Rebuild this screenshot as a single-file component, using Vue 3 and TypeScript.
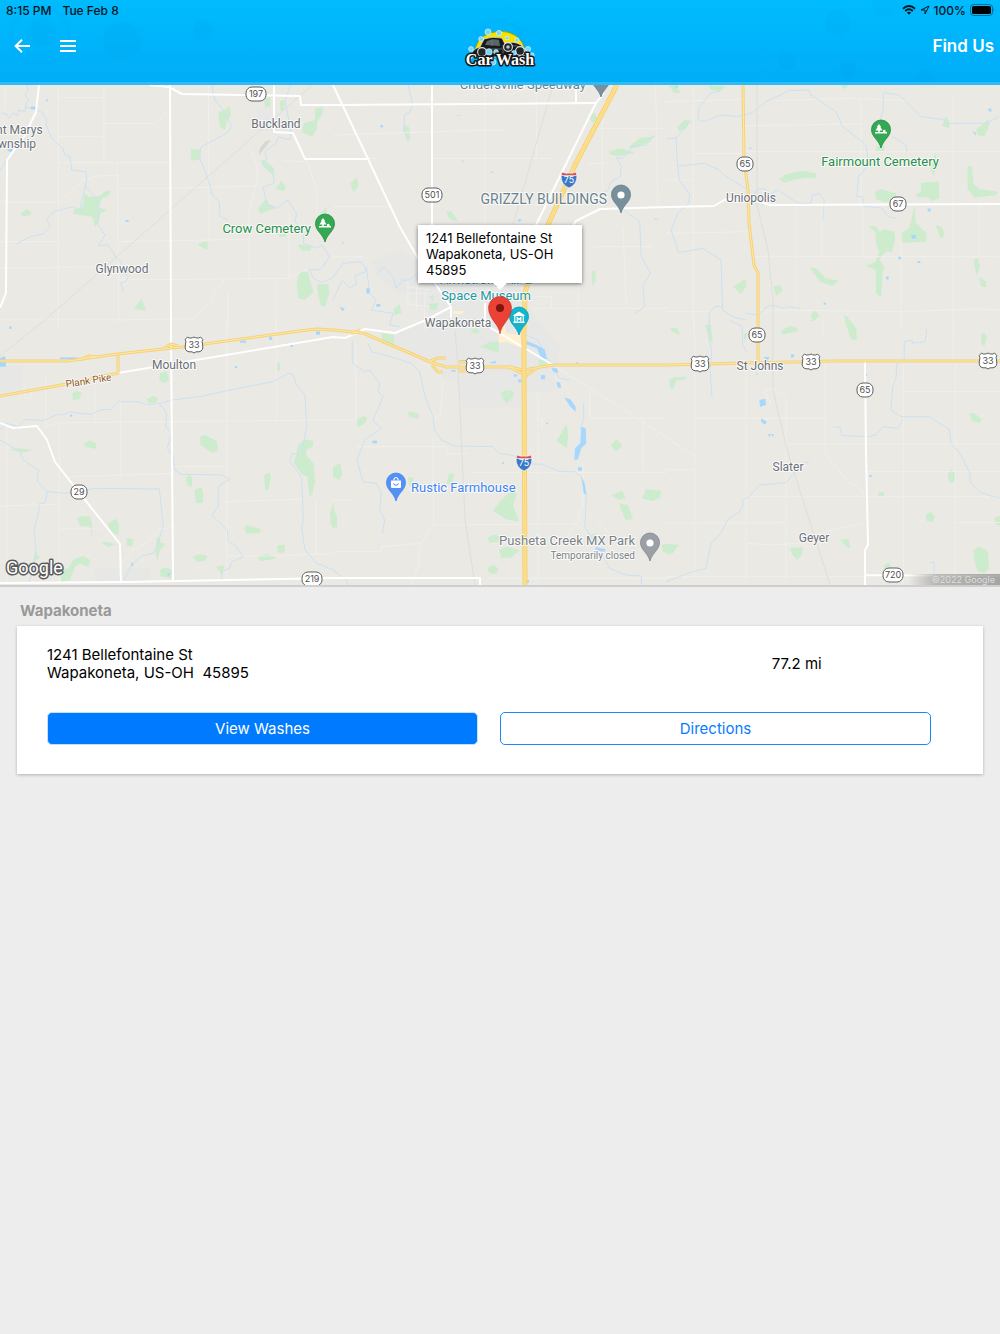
<script setup lang="ts">
interface Tile {
  x: number
  y: number
  parks: string[]
  streams: string[]
  lakes: string[]
  streets: string[]
}

interface Label {
  text: string
  x: number
  y: number
  kind: string
  anchor?: string
}

interface Shield {
  kind: 'state' | 'us' | 'interstate'
  text: string
  x: number
  y: number
}

interface Pin {
  x: number
  y: number
  color: string
  edge: string
  glyph: 'dot' | 'tree' | 'bag' | 'museum'
}

// Each tile is drawn in its own units, three to a map pixel.
const tiles: Tile[] = [
  {
    x: 0,
    y: 80,
    parks: [
      'M655 95L672 92 690 78 692 108 680 125 675 150 660 140Z',
      'M792 55L810 52 812 78 796 84Z',
      'M840 62L855 60 852 92 842 95Z',
      'M945 85L970 82 968 100 952 125 950 150 935 170 905 155 912 130 945 120Z',
      'M573 207L600 210 600 238 578 242 572 235Z',
      'M783 238L800 245 822 265 824 285 808 275 790 258Z',
      'M826 325L845 303 858 320 852 334Z',
      'M775 385L800 355 805 372 830 382 780 402Z',
      'M253 340L265 350 300 348 318 332 333 334 325 348 306 355 296 382 320 390 300 402 297 425 285 442 278 410 220 402 222 388 248 380Z',
      'M62 400L80 388 95 396 90 406 68 408Z',
      'M593 492L622 483 624 510 598 498Z',
      'M892 493L935 498 930 512 905 512Z',
      'M900 575L925 577 930 600 940 635 915 660 895 655 890 610Z',
      'M952 612L985 612 988 640 975 682 962 675 955 645Z',
      'M402 686L425 656 438 692Z',
      'M962 400L980 380 978 400Z',
      'M835 462L860 460 858 470 838 470Z',
    ],
    streams: [
      'M80 15L85 30 75 45 85 60 75 82 98 85 128 98 140 120 138 135 155 175 188 205 195 225 210 230 215 270 258 275 260 300 255 320 285 350 297 380 292 430 315 465 295 497 325 495 345 528 365 550 360 570 385 590 380 602 362 610 370 632',
      'M5 100L20 103 28 115 40 98 52 108 55 90 75 95 78 82',
      'M258 315L247 350 240 395 220 380 160 395 140 420 152 440 130 462 90 470 50 492',
      'M0 272L20 240 40 210 75 160',
      'M635 15L645 60 670 90 695 140 680 160 602 202 600 238 610 260 625 300 637 345 658 365 660 410 685 420',
      'M872 15L855 60 872 150 870 180 835 170 828 190 795 215 800 240 785 248 820 285 822 310 790 320 795 350 800 375 830 385 862 360 890 400 885 425 912 460 910 490 950 505 965 495 988 530 962 570 928 568 940 595 965 608 1002 592',
    ],
    lakes: ['M92 80H106V88H92Z', 'M377 420H386V426H377Z', 'M20 206H38V214L28 216Z', 'M138 58H143V64H138Z', 'M28 740H34V746H28Z'],
    streets: [
      'M175 15V750',
      'M175 52H310M312 15V247M175 170H312M312 130H468M175 248H508M470 128L505 90',
      'M352 248L356 720M0 366H180L250 300 300 287H352M356 325H510L770 318',
      'M625 15L628 480M356 485L748 478M748 600V390L772 300 770 255 748 200',
      'M0 485H180M0 565L356 560M358 600L865 595 925 565M0 720H358L585 716 600 695 635 665 640 640 670 610 668 598',
      'M920 240L950 330V400M850 243L920 245M868 400V600M828 596V750M683 640V750',
      'M15 15V95',
    ],
  },
  {
    x: 333,
    y: 80,
    parks: [
      'M210 135L228 140 232 182 220 180Z',
      'M52 310L72 292 76 320 62 337Z',
      'M340 396L355 392 375 425 350 418Z',
      'M765 112L785 98 792 118 780 128Z',
      'M828 213L865 205 905 218 860 228 832 224Z',
      'M885 202L920 175 968 168 940 190 905 205Z',
      'M776 575L788 570 788 605 778 616Z',
      'M180 690L200 672 205 700 185 705Z',
      'M288 650L302 645 300 665Z',
      'M288 672L315 668 310 690 292 690Z',
    ],
    streams: [
      'M225 15L238 70 232 95 215 105 212 150 225 180',
      'M965 165L940 195 900 200 870 235 850 232 865 260 862 290 835 305 825 330 790 350 760 335',
      'M870 385L885 400 920 425 925 530 953 580 930 615 935 680 905 700',
      'M0 592L30 550 85 545 100 575 65 588 72 610 50 625 28 600 10 640 0 660',
      'M100 560L110 640 130 660 115 690 180 700 170 735 200 740',
      'M130 585L150 560 180 590 190 625 210 600 230 600 255 580 310 620',
      'M370 108Q380 100 385 108',
    ],
    lakes: [
      'M142 135H150V142H142Z', 'M388 240L393 246H388Z', 'M475 274L484 278H475Z', 'M28 485L36 490H28Z', 'M556 416L568 420 556 426Z',
      'M965 415L978 418H965Z', 'M100 625H110V640H100Z', 'M130 672H142V680H130Z', 'M20 680L36 686 28 694Z',
    ],
    streets: [
      'M0 165L470 150 525 150M455 15V440M490 15L530 45 610 15M296 235H660',
      'M610 30V230M780 145H1000M808 120V380M600 375H730M968 15L975 380M765 250L830 250',
      'M0 380H170M735 430V750M130 235L0 240M600 650H655V685H600M655 685H1000M870 440L880 685M780 500H960',
      'M0 530H90M215 640H290M220 620L290 630M215 670L290 680M225 600V690M250 600V690M275 640V750',
    ],
  },
  {
    x: 666,
    y: 80,
    parks: [
      'M8 15H30L43 38 25 40Z', 'M128 15L180 20 160 35 132 28Z', 'M525 15H550L535 28Z',
      'M35 140L55 120 76 122 55 150 38 152Z',
      'M340 298L360 283 410 272 450 280 452 295 430 293 390 298 355 308Z',
      'M632 197H655V213H630Z',
      'M828 138L840 108 850 125 850 145Z', 'M930 150L965 120 972 130 955 170 935 165Z',
      'M628 335L645 328 690 340 690 358 660 366 630 358Z',
      'M748 345L765 335 765 308 818 305 820 355 800 364 785 352 755 352Z',
      'M795 265L808 218 812 240 803 290Z',
      'M905 258L918 258 922 310 940 328 995 335 990 345 925 353 905 325Z',
      'M608 440L628 438 640 455 655 448 685 455 688 475 678 515 658 515 640 540 655 560 650 575 645 652 630 640 630 570 600 558 628 545 640 518 630 485 628 455Z',
      'M745 380L750 430 782 460 780 485 710 488 706 460 730 445Z',
      'M808 435L828 442 836 465 825 476Z',
      'M432 563L450 565 480 595 518 602 500 618 462 605Z',
      'M202 620L238 596 240 620 225 642Z', 'M322 620L345 615 350 632 330 648Z',
      'M922 540L935 533 942 560 932 587Z', 'M938 592L962 605 960 622 945 618Z',
      'M435 703L448 690 460 708 440 725Z', 'M533 708L545 710 565 750 550 750Z',
      'M118 738H138L130 750Z', 'M350 748L375 738 395 748Z',
    ],
    streams: [
      'M170 15L160 35 135 38 100 80 95 118 115 125 160 105 215 110 260 98 300 65 370 32 430 30 435 45 510 95 530 140 600 195 608 250 578 290 572 350 590 350 592 375',
      'M655 38L700 45 740 85 765 110 830 118 845 130 930 130 960 130 1000 110',
      'M652 38V90L640 130',
      'M680 170L720 195 723 215',
      'M70 125L30 175 35 260 40 300 72 345 68 370 35 400 15 450 38 518 110 505 165 540 170 690 200 710 240 720',
      'M0 175L30 175M35 258L115 250 160 270 180 290 230 320 250 330',
      'M260 355L270 330 295 325 310 345 335 330 400 372 435 370 440 345 460 340 475 360 470 420',
      'M590 378L650 385 665 410 692 415',
      'M405 685L365 680 355 685 320 675 305 680 275 705 240 700M170 680L145 680 130 700 130 750',
    ],
    lakes: [
      'M965 90L975 83 977 97Z', 'M918 153L930 158 930 166Z', 'M785 386H794V394H785Z', 'M736 465H750V475L738 477Z',
      'M697 530H705V538H697Z', 'M755 543H763V549H755Z', 'M660 590H668V598H660Z', 'M473 668H480V674H473Z', 'M28 17H36V22H28Z', 'M250 203H256V207H250Z',
    ],
    streets: [
      'M82 15V370M0 65L230 58M330 62L560 55 720 62M235 137L590 132M585 60V380M82 220H230M240 215H1000M862 40V380',
      'M0 300H82M82 375V750M0 460L250 455M265 530H1000M390 375V685M468 375V530M590 380V530M705 490V750M280 690L700 695 940 687 1000 690M862 380V750M0 695H130M940 375V530',
    ],
  },
  {
    x: 0,
    y: 320,
    parks: [
      'M480 160L500 153 508 180 490 190 478 180Z', 'M218 220L230 212 245 220 238 238 218 240Z', 'M440 238L460 227 474 235 468 248 445 250Z',
      'M250 372L270 361 288 370 288 386 262 382Z', 'M30 388L60 385 97 390 65 398Z', 'M600 350L615 345 650 362 654 392 635 398 602 375Z',
      'M558 475L568 463 578 475 575 502 562 495Z', 'M583 510L605 502 610 520 608 548 588 550Z', 'M793 465L808 458 813 472 805 512 795 508Z',
      'M895 375L915 358 940 362 938 380 920 388 918 405 940 430 945 485 936 528 928 525 922 470 905 462 882 430Z',
      'M232 595L245 588 270 590 275 610 278 655 270 620 240 618Z', 'M325 610L348 596 358 615 355 645 340 640 325 622Z',
      'M305 670L320 665 345 673 325 682Z', 'M380 655L400 658 396 680 380 676Z', 'M470 655L478 650 482 668 497 672 480 690 472 722 467 700Z',
      'M733 625L740 614 783 628 780 640 738 640Z', 'M833 675H855V698H833Z', 'M578 710L600 703 622 708 615 722 590 725Z',
      'M775 710L800 702 828 710 820 718 780 724Z', 'M180 750L205 745 220 718 250 708 270 720 265 742 240 730 225 740 210 780 185 785Z',
      'M105 695L120 712 100 728Z', 'M480 750L495 742 517 750 512 775 482 768Z', 'M648 740L672 736 668 765Z', 'M830 130H840V152H830Z', 'M990 580L1002 545V628L992 610Z',
    ],
    streams: [
      'M0 330L20 310 55 320 75 298 130 302 175 282 190 285 210 275 240 280 275 283 300 270 335 268 355 245 415 245 440 255 480 250 515 240 600 230 700 208 820 185 865 160 880 165 890 195 915 225 920 320 905 400 875 402 870 425 905 472 910 600 905 625 915 690 950 730 1002 750',
      'M0 360L60 395 70 420 115 450 112 485 142 515 135 548 115 552 118 570 102 630 108 690 100 750 85 790',
      'M142 515L195 520 285 505 478 507 490 620 470 680 460 700 425 708 395 735 372 780',
      'M478 250L500 280 497 320 515 340 502 385 520 410 525 450 545 463 665 465 688 478 655 500 655 560 635 585 682 630 685 665 705 675 730 710 695 725 690 745 665 755 665 780',
    ],
    lakes: [
      'M0 115L15 108 18 122 18 140H0Z', 'M180 112H232V118H180Z', 'M720 62H738V68H720Z', 'M807 50H816V60H807Z', 'M948 34H960V44H948Z', 'M705 138H712V144H705Z', 'M872 75H879V81H872Z', 'M210 284H216V290H210Z', 'M28 20H34V26H28Z', 'M394 728H399V738H394Z', 'M503 760H509V766H503Z',
    ],
    streets: [
      'M20 320V790M137 160V320M75 198V235H92V215M285 170V305M178 310V790M137 320L178 308 1002 300M362 235V470M0 558L178 553M210 470L350 466 520 460',
      'M178 627H300M680 0V440L520 440M680 440V780M830 0V300M665 545L905 538M365 730L400 690 440 670 480 627 520 622M684 708H830L1002 700M948 540V700',
    ],
  },
  {
    x: 333,
    y: 320,
    parks: [
      'M145 40L182 45 185 78 148 72Z', 'M412 30L430 24 440 36 425 42Z', 'M442 80L470 65 497 65 497 98Z', 'M502 218L520 210 543 215 540 230 520 252Z',
      'M72 300L90 288 102 292 98 308 75 322Z', 'M224 280L232 273 258 284 255 296 230 290Z', 'M670 362L685 340 700 312 706 340 702 385Z', 'M834 376L850 357 867 375 862 385 848 394Z',
      'M0 440L22 430 28 465 18 480 0 470Z', 'M340 490L350 460 364 462 355 495Z', 'M225 470L243 475 235 500 228 495Z',
      'M480 572L500 545 548 500 550 530 540 555 558 605 520 598Z', 'M835 525L868 512 878 535 860 540Z', 'M928 535L938 508 985 512 980 535 955 543Z',
      'M858 550L885 555 900 598 878 600 865 570Z', 'M463 655L480 645 500 647 497 665 470 668Z', 'M498 690L520 680 560 690 535 712 505 714Z',
      'M462 745L480 734 496 745 490 762 470 760Z', 'M0 565L12 590 12 620 0 628Z', 'M615 120L660 122 620 142Z', 'M772 645L790 640 792 665 775 670Z', 'M985 675L1002 672V700L990 695Z',
    ],
    streams: [
      'M58 60V130L95 155 110 150 140 190 135 215 150 230 120 300 145 325 95 360 72 420 90 485 130 490 145 520 140 570 155 600 148 642',
      'M105 70L115 95 190 115 235 130 260 155 275 225 300 290 305 330 325 360 365 378 480 380 500 400 560 410',
      'M595 432L625 432 680 455 725 455 745 470 760 520 758 580 755 620 800 690 830 745 880 765 925 768 925 795',
      'M580 45L615 60 640 110 665 150 680 175 710 180M752 250V300L740 330',
      'M0 750L40 780 45 795',
    ],
    lakes: [
      'M580 62L610 75 635 88 642 118 625 115 612 85 582 74Z', 'M655 145L672 145 676 158 662 156Z', 'M670 185L682 188 684 205 674 202Z', 'M694 232L712 238 728 260 728 275 710 258Z',
      'M745 320L758 325 760 370 745 385 735 418 724 420 726 385 742 370Z', 'M735 442H747V452H735Z', 'M745 470L755 490 760 525 752 520Z', 'M624 165H636V178H624Z', 'M118 362H132V370H118Z',
      'M542 163H552V170H542Z', 'M555 178H565V187H555Z', 'M355 150H368V155H355Z', 'M470 128L488 122V130H470Z', 'M380 120H402V127H380Z', 'M788 682L818 688 815 696 788 690Z', 'M580 780H588V788H580Z', 'M508 426H513V431H508Z', 'M730 126H735V131H730Z', 'M640 308H645V312H640Z',
    ],
    streets: [
      'M68 300H0M68 70V300M330 180L322 280 302 300M300 350L302 610 260 680 258 730 235 795M68 380H340L342 402 405 400M68 540H0M410 458H1002M302 615L735 612',
      'M615 220V795M615 298L628 300V322H615M740 550H750V570H738V600L710 640 695 660M770 205V295L1002 295M750 430V560L830 640M0 695H145V680L265 670M470 775H1002M660 135L1002 352M930 300V450',
    ],
  },
  {
    x: 666,
    y: 320,
    parks: [
      'M12 22L35 25 42 45 18 36Z', 'M118 15H135L140 70 130 60Z', 'M232 42L245 38 236 65Z', 'M345 32L385 20 397 32 350 44Z', 'M535 0H552L570 25 573 60 555 58Z',
      'M10 180L25 172 60 170 58 178 30 182 22 208 12 205Z', 'M945 45L955 38 963 52 955 80 946 70Z', 'M910 280L925 280 948 298 940 310 918 302Z', 'M846 460L855 448 867 460 865 485 852 488 846 475Z',
      'M636 518L652 516 654 528 638 530Z', 'M780 582L795 576 807 590 800 606 782 603Z', 'M522 660L548 656 553 686 538 678Z', 'M370 684L412 682 408 702 395 720 380 705Z',
      'M0 672L38 674 20 700 0 702Z', 'M922 690L940 680 965 692 970 745 955 760 935 755 925 720Z', 'M987 592L1002 588V618L988 612Z', 'M655 735L668 728 678 745 655 750Z', 'M430 0H450L440 4Z',
    ],
    streams: [
      'M130 0L128 55 138 90 132 150 138 230M190 0L228 20 230 75 242 95',
      'M782 28L778 65 740 70 738 60 715 65 715 118M693 125L690 175 680 200 675 270 705 290 790 290 850 328 855 370 885 405 912 460 912 485 940 515 980 530 1002 532',
      'M505 320L522 322 528 347 605 350 630 345 650 320 695 325 712 298',
      'M430 425L410 430 380 465 360 488 280 495 250 530 230 540 230 560 220 575 185 600 165 640 135 670 120 745 80 755 40 770 0 785',
      'M790 727H805V760',
    ],
    lakes: [
      'M295 110L310 112 305 122H297Z', 'M375 103H384V112H375Z', 'M280 240L298 236 300 255 282 260Z', 'M285 295L302 305 296 314 286 305Z', 'M304 342H312V352Z', 'M313 342H322V352Z', 'M598 160H603V168H598Z', 'M610 465H617V471H610Z', 'M270 158L276 164H270Z',
    ],
    streets: [
      'M85 0V125M85 140V770M240 140V795M88 295H478M360 295V230L320 205 295 215 315 250M478 125V400L545 485 570 495 600 525M360 372H1002M0 352L85 408M360 290V795M0 450H85',
      'M245 530H360L1002 530M0 610L360 608M460 640L595 608M245 670L310 675 400 670M712 130V795M712 215H1002M862 0V125M868 130V795M870 608H1002M470 0V50M605 455H1002M0 770H600',
    ],
  },
]

const layers = ['parks', 'streets', 'streams', 'lakes'] as const

const rails = [
  'M312 85L45 320 0 356',
  'M553 85L500 270M455 330L458 365 465 520 475 585',
  'M757 85V205L768 250 773 300V390L787 450 830 585',
]

const whiteRoads = [
  'M170 85L171 330 173 580',
  'M150 85L169 87 182 94 300 96 301 105 333 105 596 103',
  'M274 85V132L293 133 305 159 368 159',
  'M333 85L368 159 400 227 416 255 451 307V318',
  'M432 85V226M576 85V103',
  'M604 93L596 103 563 170 535 227',
  'M39 85L36 112 25 135 7 160 6 293 0 308',
  'M570 230L576 221 600 209 667 207 714 206 726 199 756 201 770 205 1000 204',
  'M118 373L333 337 345 338 365 329 395 333 426 320 451 307',
  'M0 423L13 428 37 426 47 440 55 462 120 544 121 583',
  'M0 583L127 582 333 578 480 578V585',
  'M865 362L866 453 868 545 865 550V585M865 575L1000 576',
  'M486 325L553 365M485 303V325',
]

const yellowRoads = [
  'M0 361L68 361 117 354 182 347 300 331 317 329 333 330 363 333 433 363 446 367 510 367 523 370 553 365 667 365 746 363 833 361 1000 361',
  'M0 396L67 384 118 373V355',
  'M743 85L744 160 748 190 749 223 754 265 758 273 758 320V362',
  'M430 361L438 358 446 358M432 365L438 372 443 372M458 362H467M458 371H467M523 355L524 377 537 368M507 366L523 374M163 349L171 344 178 346M80 360L88 356 97 357M351 334L360 330',
]

const interstate = 'M617 85L576 163 547 227 534 260 525 293 524 335 524 370 525 585'

const labels: Label[] = [
  { text: 'nt Marys', x: -4, y: 134, kind: 'town', anchor: 'start' },
  { text: 'wnship', x: -2, y: 148, kind: 'town', anchor: 'start' },
  { text: 'Buckland', x: 276, y: 128, kind: 'town' },
  { text: 'Glynwood', x: 122, y: 273, kind: 'town' },
  { text: 'Uniopolis', x: 751, y: 202, kind: 'town' },
  { text: 'Wapakoneta', x: 458, y: 327, kind: 'town' },
  { text: 'Moulton', x: 174, y: 369, kind: 'town' },
  { text: 'St Johns', x: 760, y: 370, kind: 'town' },
  { text: 'Slater', x: 788, y: 471, kind: 'town' },
  { text: 'Geyer', x: 814, y: 542, kind: 'town' },
  { text: 'Crow Cemetery', x: 311, y: 233, kind: 'park', anchor: 'end' },
  { text: 'Fairmount Cemetery', x: 880, y: 166, kind: 'park' },
  { text: 'Cridersville Speedway', x: 586, y: 89, kind: 'place', anchor: 'end' },
  { text: 'GRIZZLY BUILDINGS', x: 607, y: 204, kind: 'business', anchor: 'end' },
  { text: 'Armstrong Air &', x: 486, y: 284, kind: 'museum' },
  { text: 'Space Museum', x: 486, y: 300, kind: 'museum' },
  { text: 'Rustic Farmhouse', x: 411, y: 492, kind: 'shop', anchor: 'start' },
  { text: 'Pusheta Creek MX Park', x: 635, y: 545, kind: 'closed', anchor: 'end' },
  { text: 'Temporarily closed', x: 635, y: 559, kind: 'closed-note', anchor: 'end' },
]

const shields: Shield[] = [
  { kind: 'state', text: '197', x: 256, y: 94 },
  { kind: 'state', text: '501', x: 432, y: 195 },
  { kind: 'state', text: '65', x: 745, y: 164 },
  { kind: 'state', text: '67', x: 898, y: 204 },
  { kind: 'state', text: '65', x: 757, y: 335 },
  { kind: 'state', text: '65', x: 865, y: 390 },
  { kind: 'state', text: '29', x: 79, y: 492 },
  { kind: 'state', text: '219', x: 312, y: 579 },
  { kind: 'state', text: '720', x: 893, y: 575 },
  { kind: 'us', text: '33', x: 194, y: 345 },
  { kind: 'us', text: '33', x: 475, y: 366 },
  { kind: 'us', text: '33', x: 700, y: 364 },
  { kind: 'us', text: '33', x: 811, y: 362 },
  { kind: 'us', text: '33', x: 988, y: 361 },
  { kind: 'interstate', text: '75', x: 569, y: 180 },
  { kind: 'interstate', text: '75', x: 524, y: 463 },
]

const pins: Pin[] = [
  { x: 325, y: 242, color: '#34a853', edge: '#1e8e3e', glyph: 'tree' },
  { x: 881, y: 148, color: '#34a853', edge: '#1e8e3e', glyph: 'tree' },
  { x: 601, y: 97, color: '#78909c', edge: '#607d8b', glyph: 'dot' },
  { x: 621, y: 213, color: '#78909c', edge: '#607d8b', glyph: 'dot' },
  { x: 519, y: 335, color: '#12b5cb', edge: '#129eaf', glyph: 'museum' },
  { x: 396, y: 501, color: '#5491f5', edge: '#4285f4', glyph: 'bag' },
  { x: 650, y: 561, color: '#9aa0a6', edge: '#80868b', glyph: 'dot' },
]

const shieldWidth = (s: Shield): number => (s.text.length > 2 ? 20 : 16)

const bubbles = [
  { x: '4%', y: 35, r: 29, ring: true },
  { x: '4.2%', y: 32, r: 14, ring: false },
  { x: '12.2%', y: 41, r: 19, ring: false },
  { x: '20.3%', y: 30, r: 10, ring: false },
  { x: '50%', y: 44, r: 24, ring: true },
  { x: '78.7%', y: 61, r: 9, ring: false },
  { x: '83.8%', y: 23, r: 13, ring: false },
  { x: '84.8%', y: 70, r: 9, ring: false },
  { x: '88.5%', y: 4, r: 13, ring: false },
  { x: '92.5%', y: 79, r: 9, ring: false },
]

const location = {
  city: 'Wapakoneta',
  street: '1241 Bellefontaine St',
  region: 'Wapakoneta, US-OH',
  zip: '45895',
  distance: '77.2 mi',
}
</script>

<template>
  <div class="app">
    <header class="top">
      <svg class="bubbles" aria-hidden="true">
        <circle
          v-for="(b, i) in bubbles"
          :key="i"
          :cx="b.x"
          :cy="b.y"
          :r="b.r"
          :class="b.ring ? 'ring' : 'disc'"
        />
      </svg>

      <div class="status">
        <span>8:15 PM</span>
        <span>Tue Feb 8</span>
        <span class="status-right">
          <svg width="14" height="10" viewBox="0 0 14 10" aria-hidden="true">
            <path d="M1 3.8Q7-1.6 13 3.8M3.2 6Q7 2.6 10.8 6" fill="none" stroke="#04151c" stroke-width="1.9" />
            <path d="M7 9.8L4.9 7.6Q7 5.9 9.1 7.6Z" fill="#04151c" />
          </svg>
          <svg width="10" height="10" viewBox="0 0 10 10" aria-hidden="true">
            <path d="M9 1L1 5H5V9Z" fill="none" stroke="#04151c" stroke-linejoin="round" />
          </svg>
          <span>100%</span>
          <svg width="25" height="12" viewBox="0 0 25 12" aria-hidden="true">
            <rect x=".5" y=".5" width="22" height="11" rx="3" fill="none" stroke="#04151c" stroke-opacity=".45" />
            <rect x="2" y="2" width="19" height="8" rx="1.6" fill="#000" />
            <path d="M23.500 4Q25 6 23.500 8Z" fill="#04151c" fill-opacity=".5" />
          </svg>
        </span>
      </div>

      <nav class="nav">
        <div class="nav-left">
          <button type="button" class="icon-button" aria-label="Back">
            <svg width="16" height="14" viewBox="0 0 16 14">
              <path d="M16 7H1.5M8 .8L1.6 7 8 13.2" fill="none" stroke="#fff" stroke-width="2" />
            </svg>
          </button>
          <button type="button" class="icon-button" aria-label="Menu">
            <svg width="16" height="12" viewBox="0 0 16 12">
              <path d="M0 1H16M0 6H16M0 11H16" stroke="#fff" stroke-width="2" />
            </svg>
          </button>
        </div>

        <svg width="76" height="44" viewBox="0 0 76 44" role="img" aria-label="Car Wash">
          <path d="M13 25Q17 9 38 7Q58 8 63 25Q60 29 54 27H18Z" fill="#f4e300" stroke="#8c8400" stroke-width=".6" />
          <path d="M9 32Q10 25 18 23L22 15Q30 12 40 14L43 20Q51 16 59 21Q65 26 64 31L53 33H13Z" fill="#191919" stroke="#e9f4f7" stroke-width=".7" />
          <path d="M23 21L25 17Q31 14 37 16L38 22Z" fill="#59666b" />
          <path d="M30 15V22M41 21V30M24 25H40M46 23Q56 19 61 27" stroke="#74838a" stroke-width=".7" fill="none" />
          <circle cx="46" cy="23" r="4.4" fill="#20272a" stroke="#dfe6e8" stroke-width="1.1" />
          <circle cx="46" cy="23" r="1.8" fill="#b8c4c8" />
          <circle cx="58" cy="27" r="4.4" fill="#20272a" stroke="#dfe6e8" stroke-width="1.1" />
          <circle cx="20" cy="28" r="4.4" fill="#20272a" stroke="#dfe6e8" stroke-width="1.1" />
          <g fill="#79d5f3" stroke="#d7f5ff" stroke-width=".7">
            <circle cx="26" cy="8" r="3" />
            <circle cx="37" cy="9" r="2.6" />
            <circle cx="19" cy="15" r="2.4" />
            <circle cx="45" cy="14" r="1.8" />
            <circle cx="55" cy="16" r="2" />
            <circle cx="9" cy="25" r="2.4" />
            <circle cx="66" cy="25" r="2.6" />
            <circle cx="27" cy="28" r="3.2" />
            <circle cx="34" cy="28" r="2.4" />
            <circle cx="52" cy="29" r="2.4" />
            <circle cx="70" cy="31" r="2.2" />
            <circle cx="31" cy="38" r="3" />
            <circle cx="8" cy="32" r="2.6" />
          </g>
          <text class="logo-text" x="38" y="41" text-anchor="middle">Car Wash</text>
        </svg>

        <h1 class="title">Find Us</h1>
      </nav>
    </header>

    <section class="map" aria-label="Map">
      <svg class="map-art" viewBox="0 85 1000 500">
        <rect y="85" width="1000" height="500" fill="#eae9e4" />
        <g fill="#e7e7e6">
          <path d="M371 262L400 250 452 282 520 286 522 300 560 345 553 392 521 392V407H462L456 380 443 380 441 370 403 350 383 340 430 315 415 300 385 285Z" />
          <path d="M254 108H275V131H262ZM0 366H22V392H0ZM95 568H150V583H95ZM744 190H760L770 205 745 207Z" />
        </g>

        <g v-for="layer in layers" :key="layer" :class="layer">
          <g v-for="t in tiles" :key="`${t.x}-${t.y}`" :transform="`translate(${t.x} ${t.y}) scale(.3333)`">
            <path v-for="(d, i) in t[layer]" :key="i" :d="d" />
          </g>
        </g>

        <path v-for="d in rails" :key="d" :d="d" class="rail" />
        <path d="M498 327L505 326 506 333 520 335 522 348 514 345 507 342 499 343ZM453 311H463V314H453Z" fill="#fff1cf" />
        <path d="M259 155Q258 148 266 141L271 140Q265 148 259 155Z" fill="#d9d7cf" />
        <path v-for="d in whiteRoads" :key="d" :d="d" class="road-white" />
        <path v-for="d in yellowRoads" :key="`edge-${d}`" :d="d" class="road-edge" />
        <path v-for="d in yellowRoads" :key="d" :d="d" class="road-fill" />
        <path :d="interstate" class="interstate-edge" />
        <path :d="interstate" class="interstate-fill" />
        <path :d="interstate" class="interstate-line" />

        <text
          v-for="l in labels"
          :key="l.text"
          :x="l.x"
          :y="l.y"
          :text-anchor="l.anchor ?? 'middle'"
          :class="['label', l.kind]"
        >{{ l.text }}</text>
        <text class="label pike" transform="translate(89 384) rotate(-9)" text-anchor="middle">Plank Pike</text>

        <g v-for="(s, i) in shields" :key="i" :transform="`translate(${s.x} ${s.y})`">
          <rect
            v-if="s.kind === 'state'"
            :x="-shieldWidth(s) / 2"
            y="-7"
            :width="shieldWidth(s)"
            height="14"
            rx="6"
            class="shield"
          />
          <path
            v-else-if="s.kind === 'us'"
            class="shield"
            d="M-6.5-8Q-5-6.5-3-7Q-1-7.2 0-8Q1-7.2 3-7Q5-6.5 6.5-8L8.800-5.500Q7.500-3.500 8.500-1Q10 6 5 6.800H2L0 8-2 6.800H-5Q-10 6-8.500-1Q-7.500-3.500-8.800-5.500Z"
          />
          <template v-else>
            <path d="M-7-8Q-3-6 0-7Q3-6 7-8L8-4H-8Z" fill="#d9534f" stroke="#fff" stroke-width=".6" />
            <path d="M-8-4.500H8Q8 5 0 8Q-8 5-8-4.500Z" fill="#3b78c8" stroke="#fff" stroke-width=".6" />
          </template>
          <text class="shield-text" :class="{ light: s.kind === 'interstate' }" y="3" text-anchor="middle">{{ s.text }}</text>
        </g>

        <g v-for="(p, i) in pins" :key="i" :transform="`translate(${p.x} ${p.y})`">
          <path
            d="M0 0C-2-8-9.5-11-9.5-18.500A9.5 9.5 0 1 1 9.5-18.500C9.5-11 2-8 0 0Z"
            :fill="p.color"
            :stroke="p.edge"
            stroke-width=".8"
          />
          <circle v-if="p.glyph === 'dot'" cy="-18" r="3.6" fill="#fff" />
          <path
            v-else-if="p.glyph === 'tree'"
            d="M-2-24L.2-21H-.6L1.500-17.500H-1.200V-16H2V-17A1.300 1.300 0 0 1 4.600-17V-16H6V-14.400H-6V-16H-2.800V-17.500H-5.500L-3.400-21H-4.200Z"
            fill="#fff"
          />
          <template v-else-if="p.glyph === 'bag'">
            <path d="M-5-20.500H5V-14Q5-13 4-13H-4Q-5-13-5-14Z" fill="#fff" />
            <path d="M-2-20.500V-22Q0-25 2-22V-20.500" fill="none" stroke="#fff" stroke-width="1.2" />
            <path d="M-2.500-17.500Q0-14 2.500-17.500" fill="none" :stroke="p.color" stroke-width="1.2" />
          </template>
          <template v-else>
            <path d="M-5.500-20L0-23.500 5.500-20V-19H-5.500ZM-5.500-13.500H5.500V-12H-5.500Z" fill="#fff" />
            <path d="M-4.200-19V-13M4.200-19V-13M-1.800-13.500V-17.500L0-15.500 1.800-17.500V-13.500" fill="none" stroke="#fff" stroke-width="1.2" />
          </template>
        </g>

        <g transform="translate(500 334)">
          <path d="M0 0C-1-10-11.500-15-11.500-26A11.500 11.500 0 1 1 11.500-26C11.500-15 1-10 0 0Z" fill="#ea4335" stroke="#c5221f" stroke-width=".5" />
          <circle cy="-26" r="4" fill="#811411" />
        </g>

        <text class="google" x="6" y="574">Google</text>
        <linearGradient id="credit-shade">
          <stop offset="0" stop-color="#777" stop-opacity="0" />
          <stop offset=".3" stop-color="#777" stop-opacity=".45" />
          <stop offset="1" stop-color="#777" stop-opacity=".6" />
        </linearGradient>
        <rect x="908" y="574" width="92" height="11" fill="url(#credit-shade)" />
        <text class="credit" x="995" y="583" text-anchor="end">©2022 Google</text>
      </svg>

      <div class="callout">
        {{ location.street }}<br />{{ location.region }}<br />{{ location.zip }}
      </div>
    </section>

    <main class="results">
      <h2 class="city">{{ location.city }}</h2>
      <article class="card">
        <div class="info">
          <address class="address">
            {{ location.street }}<br />{{ location.region }}&nbsp; {{ location.zip }}
          </address>
          <span class="distance">{{ location.distance }}</span>
        </div>
        <div class="actions">
          <button type="button" class="action primary">View Washes</button>
          <button type="button" class="action">Directions</button>
        </div>
      </article>
    </main>
  </div>
</template>

<style>
body {
  background: #ededed;
}
</style>

<style scoped>
.app {
  min-height: 100vh;
  background: #ededed;
  color: #000;
  font-family: Inter, "Liberation Sans", sans-serif;
}

.top {
  position: relative;
  box-sizing: border-box;
  padding-bottom: 10px;
  border-bottom: 3px solid #2dbcf7;
  background: linear-gradient(#00bbfe, #00adf7);
  overflow: hidden;
}

.bubbles {
  position: absolute;
  inset: 0;
  width: 100%;
  height: 100%;
}

.disc {
  fill: #0089cf;
  fill-opacity: 0.06;
}

.ring {
  fill: none;
  stroke: #0089cf;
  stroke-opacity: 0.05;
  stroke-width: 3;
}

.status {
  position: relative;
  display: flex;
  align-items: center;
  gap: 11px;
  height: 20px;
  padding: 0 5px 0 6px;
  color: #04151c;
  font-size: 12px;
  font-weight: 500;
}

.status-right {
  display: flex;
  align-items: center;
  gap: 4px;
  margin-left: auto;
}

.nav {
  position: relative;
  display: grid;
  grid-template-columns: 1fr auto 1fr;
  align-items: center;
  height: 52px;
  padding: 0 6px 0 14px;
}

.nav-left {
  display: flex;
  gap: 30px;
  margin-right: 8px;
}

.icon-button {
  display: flex;
  align-items: center;
  justify-content: center;
  width: 16px;
  height: 32px;
  padding: 0;
  border: 0;
  background: none;
}

.nav > svg {
  margin-right: 8px;
}

.logo-text {
  fill: #fff;
  stroke: #151515;
  stroke-width: 3px;
  stroke-linejoin: round;
  paint-order: stroke;
  font-family: "Liberation Serif", serif;
  font-size: 16px;
  font-weight: 700;
}

.title {
  margin: 0;
  color: #fff;
  font-size: 17px;
  font-weight: 600;
  line-height: 20px;
  text-align: right;
}

.map {
  position: relative;
  border-bottom: 2px solid #cfcfcf;
}

.map-art {
  display: block;
  width: 100%;
  height: auto;
  font-family: Roboto, "Liberation Sans", sans-serif;
}

.parks {
  fill: #cdebcd;
}

.lakes {
  fill: #a6d7fd;
}

.streams {
  fill: none;
  stroke: #cbe1f3;
  stroke-width: 3;
  stroke-linejoin: round;
}

.streets {
  fill: none;
  stroke: #f0efec;
  stroke-width: 3;
}

.rail {
  fill: none;
  stroke: #dededb;
}

.road-white {
  fill: none;
  stroke: #fff;
  stroke-width: 2;
  stroke-linejoin: round;
}

.road-edge {
  fill: none;
  stroke: #f5d27a;
  stroke-width: 3;
  stroke-linejoin: round;
}

.road-fill {
  fill: none;
  stroke: #fde9a6;
  stroke-width: 1;
  stroke-linejoin: round;
}

.interstate-edge {
  fill: none;
  stroke: #f7d070;
  stroke-width: 5;
}

.interstate-fill {
  fill: none;
  stroke: #fde293;
  stroke-width: 3;
}

.interstate-line {
  fill: none;
  stroke: #f9d880;
}

.label {
  stroke: #fff;
  stroke-opacity: 0.8;
  stroke-width: 2px;
  stroke-linejoin: round;
  paint-order: stroke;
  font-size: 13px;
}

.town {
  fill: #6b6f78;
  font-size: 12px;
}

.park {
  fill: #26904a;
}

.place {
  fill: #6a828e;
}

.business {
  fill: #6a828e;
  font-size: 14px;
}

.museum {
  fill: #1f9aa4;
}

.shop {
  fill: #4285f4;
}

.closed {
  fill: #7c8288;
}

.closed-note {
  fill: #7c8288;
  font-size: 10px;
}

.pike {
  fill: #8d5a2b;
  font-size: 10px;
}

.shield {
  fill: #fff;
  stroke: #5f5f5f;
}

.shield-text {
  fill: #505050;
  font-family: Inter, sans-serif;
  font-size: 9px;
}

.shield-text.light {
  fill: #fff;
}

.google {
  fill: #fff;
  stroke: #5a5a5a;
  stroke-width: 3px;
  stroke-linejoin: round;
  paint-order: stroke;
  font-size: 18px;
}

.credit {
  fill: #e9e9e9;
  fill-opacity: 0.8;
  font-family: Inter, sans-serif;
  font-size: 9px;
}

.callout {
  position: absolute;
  top: 28%;
  left: 50%;
  box-sizing: border-box;
  width: 164px;
  padding: 5px 8px;
  background: #fff;
  box-shadow: 0 1px 4px rgba(0, 0, 0, 0.5);
  font-size: 13px;
  line-height: 16px;
  transform: translateX(-50%);
}

.callout::after {
  position: absolute;
  top: 100%;
  left: 50%;
  border: 7px solid transparent;
  border-top-color: #fff;
  border-bottom: 0;
  content: "";
  transform: translateX(-50%);
}

.results {
  padding: 14px 17px;
}

.city {
  margin: 0 3px 5px;
  color: #999;
  font-size: 15px;
  font-weight: 700;
  line-height: 20px;
}

.card {
  padding: 20px 30px 29px;
  background: #fff;
  box-shadow: 0 1px 3px rgba(0, 0, 0, 0.25);
}

.info {
  display: grid;
  grid-template-columns: 4fr 1fr;
  align-items: center;
  font-size: 15px;
  line-height: 18px;
}

.address {
  font-style: normal;
}

.actions {
  display: grid;
  grid-template-columns: 1fr 1fr;
  margin-top: 30px;
}

.action {
  height: 33px;
  margin-right: 22px;
  padding: 0;
  border: 1px solid #1c86ff;
  border-radius: 5px;
  background: #fff;
  color: #0a7aff;
  font-family: inherit;
  font-size: 15px;
}

.primary {
  border-color: #c4e0ff;
  background: #007aff;
  color: #fff;
}
</style>
